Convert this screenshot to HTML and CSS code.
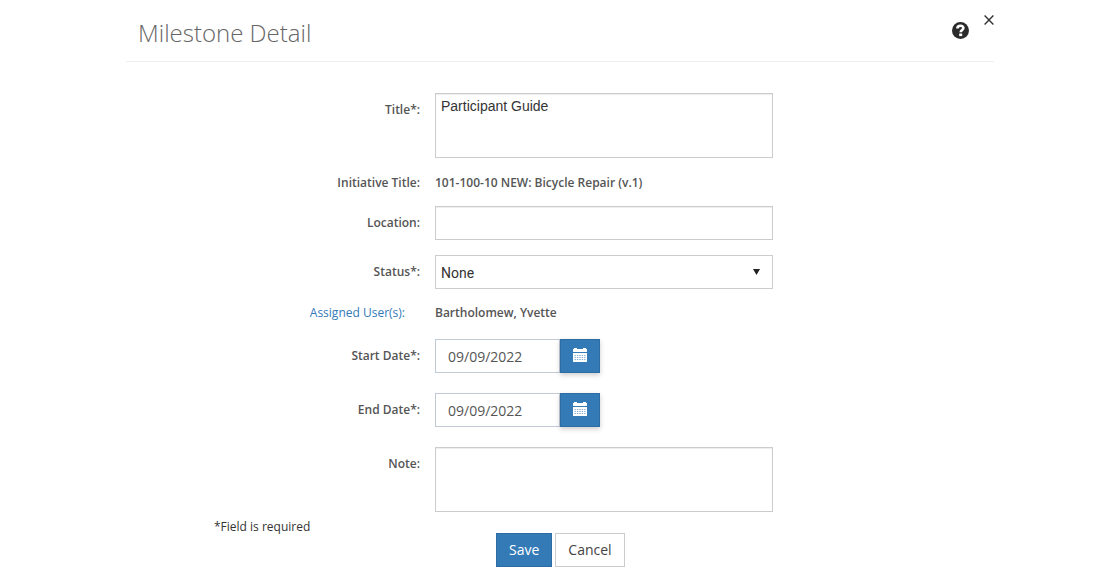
FILE: index.html
```html
<!DOCTYPE html>
<html lang="en">
<head>
  <meta charset="UTF-8">
  <title>Milestone Detail</title>
  <link rel="stylesheet" href="styles.css">
</head>
<body>

  <div class="dialog">
    <header class="dialog-header">
      <h1>Milestone Detail</h1>
      <button type="button" class="icon-btn help-btn" aria-label="Help">
        <svg width="17" height="17" viewBox="0 0 17 17">
          <circle cx="8.5" cy="8.5" r="8.5" fill="#2b2b2b"/>
          <path d="M5.4 6.6C5.4 4.5 6.7 3.7 8.5 3.7S11.4 4.7 11.4 6.1C11.4 8 8.7 8 8.7 10.3" fill="none" stroke="#fff" stroke-width="2.6"/>
          <rect x="7.2" y="11.5" width="3" height="2.6" fill="#fff"/>
        </svg>
      </button>
      <button type="button" class="icon-btn close-btn" aria-label="Close">
        <svg width="10" height="10" viewBox="0 0 10 10">
          <path d="M.6.6l8.8 8.8M9.4.6L.6 9.4" stroke="#333" stroke-width="1.4"/>
        </svg>
      </button>
    </header>

    <form class="milestone-form">
      <div class="row">
        <label for="title">Title*:</label>
        <textarea id="title" class="control">Participant Guide</textarea>
      </div>

      <div class="row static">
        <span class="label">Initiative Title:</span>
        <span class="value">101-100-10 NEW: Bicycle Repair (v.1)</span>
      </div>

      <div class="row">
        <label for="location">Location:</label>
        <input type="text" id="location" class="control">
      </div>

      <div class="row">
        <label for="status">Status*:</label>
        <div class="select-wrap">
          <select id="status" class="control">
            <option>None</option>
          </select>
          <svg class="arrow" width="7" height="6" viewBox="0 0 7 6"><path d="M0 0h7L3.5 6z" fill="#222"/></svg>
        </div>
      </div>

      <div class="row static users">
        <span class="label"><a href="#">Assigned User(s):</a></span>
        <span class="value">Bartholomew, Yvette</span>
      </div>

      <div class="row date-row">
        <label for="startDate">Start Date*:</label>
        <div class="date-group">
          <input type="text" id="startDate" class="date-input" value="09/09/2022">
          <button type="button" class="date-btn" aria-label="Pick start date">
            <svg width="14" height="14" viewBox="0 0 14 14">
              <path d="M0 1h1V0h3v1h6V0h3v1h1v3H0zM0 5h14v9H0z" fill="#fff"/>
              <path d="M1.5 7.5h11M1.5 9.5h11M1.5 11.5h11" stroke="#337ab7" stroke-opacity=".6" stroke-dasharray="1.4 1"/>
            </svg>
          </button>
        </div>
      </div>

      <div class="row date-row">
        <label for="endDate">End Date*:</label>
        <div class="date-group">
          <input type="text" id="endDate" class="date-input" value="09/09/2022">
          <button type="button" class="date-btn" aria-label="Pick end date">
            <svg width="14" height="14" viewBox="0 0 14 14">
              <path d="M0 1h1V0h3v1h6V0h3v1h1v3H0zM0 5h14v9H0z" fill="#fff"/>
              <path d="M1.5 7.5h11M1.5 9.5h11M1.5 11.5h11" stroke="#337ab7" stroke-opacity=".6" stroke-dasharray="1.4 1"/>
            </svg>
          </button>
        </div>
      </div>

      <div class="row note-row">
        <label for="note">Note:</label>
        <textarea id="note" class="control"></textarea>
      </div>

      <footer class="form-footer">
        <p class="required">*Field is required</p>
        <div class="actions">
          <button type="submit" class="btn btn-primary">Save</button>
          <button type="button" class="btn">Cancel</button>
        </div>
      </footer>
    </form>
  </div>

</body>
</html>
```
FILE: styles.css
```css
* {
  box-sizing: border-box;
}
body {
  margin: 0;
  background: #fff;
  color: #555;
  font-family: 'Open Sans', sans-serif;
  font-size: 12px;
}
.dialog {
  max-width: 868px;
  margin: 0 auto;
}

/* Header */
.dialog-header {
  display: flex;
  align-items: flex-start;
  height: 62px;
  padding-left: 12px;
  border-bottom: 1px solid #eee;
}
.dialog-header h1 {
  flex: 1;
  margin: 16px 0 0;
  font-size: 24px;
  font-weight: 300;
  line-height: 34px;
  color: #666;
}
.icon-btn {
  padding: 0;
  border: none;
  background: none;
  cursor: pointer;
}
.icon-btn svg {
  display: block;
}
.help-btn {
  margin: 22px 15px 0 0;
}
.close-btn {
  margin-top: 15px;
}

/* Form rows */
.milestone-form {
  padding-top: 31px;
}
.row {
  display: grid;
  grid-template-columns: minmax(0, 294px) minmax(0, 338px);
  column-gap: 15px;
  align-items: start;
  margin-bottom: 15px;
}
label, .label {
  font-weight: 600;
  line-height: 34px;
  text-align: right;
}
.value {
  font-weight: 600;
}
.static {
  margin-bottom: 13px;
}
.static .label, .static .value {
  line-height: 20px;
}
.users {
  margin: -1px 0 16px;
}
.users .label {
  padding-right: 15px;
  font-weight: 400;
}
a {
  color: #337ab7;
  text-decoration: none;
}
a:hover {
  text-decoration: underline;
}

/* Controls */
.control {
  display: block;
  width: 100%;
  height: 34px;
  padding: 4px 5px;
  border: 1px solid #ccc;
  border-radius: 0;
  background: #fff;
  box-shadow: inset 0 1px 1px rgba(0,0,0,0.075);
  color: #333;
  font-family: 'Liberation Sans', Arial, sans-serif;
  font-size: 14px;
}
textarea.control {
  height: 65px;
  resize: none;
}
.select-wrap {
  position: relative;
}
select.control {
  appearance: none;
  padding-top: 6px;
  box-shadow: none;
  font-family: Roboto, sans-serif;
}
.arrow {
  position: absolute;
  top: 14px;
  right: 13px;
  pointer-events: none;
}
.date-row {
  margin-bottom: 20px;
}
.date-group {
  display: flex;
  align-items: flex-start;
}
.date-input {
  width: 125px;
  height: 34px;
  padding: 0 12px;
  border: 1px solid #c2cad8;
  color: #555;
  font-family: 'Open Sans', sans-serif;
  font-size: 14px;
}
.date-btn {
  display: flex;
  justify-content: center;
  width: 40px;
  height: 34px;
  padding: 8px 0;
  border: 1px solid #2e6da4;
  background: #337ab7;
  box-shadow: 0 2px 5px rgba(0,0,0,0.2);
  cursor: pointer;
}
.note-row {
  margin-bottom: 0;
}

/* Footer */
.form-footer {
  display: grid;
  grid-template-columns: 370px 1fr;
}
.required {
  margin: 6px 0 0;
  padding-left: 88px;
  line-height: 18px;
  color: #333;
}
.actions {
  display: flex;
  gap: 3px;
  padding-top: 21px;
}
.btn {
  height: 34px;
  padding: 0 12px 2px;
  border: 1px solid #ccc;
  background: #fff;
  color: #444;
  font-family: 'Open Sans', sans-serif;
  font-size: 14px;
  cursor: pointer;
}
.btn-primary {
  border-color: #2e6da4;
  background: #337ab7;
  color: #fff;
}
```
